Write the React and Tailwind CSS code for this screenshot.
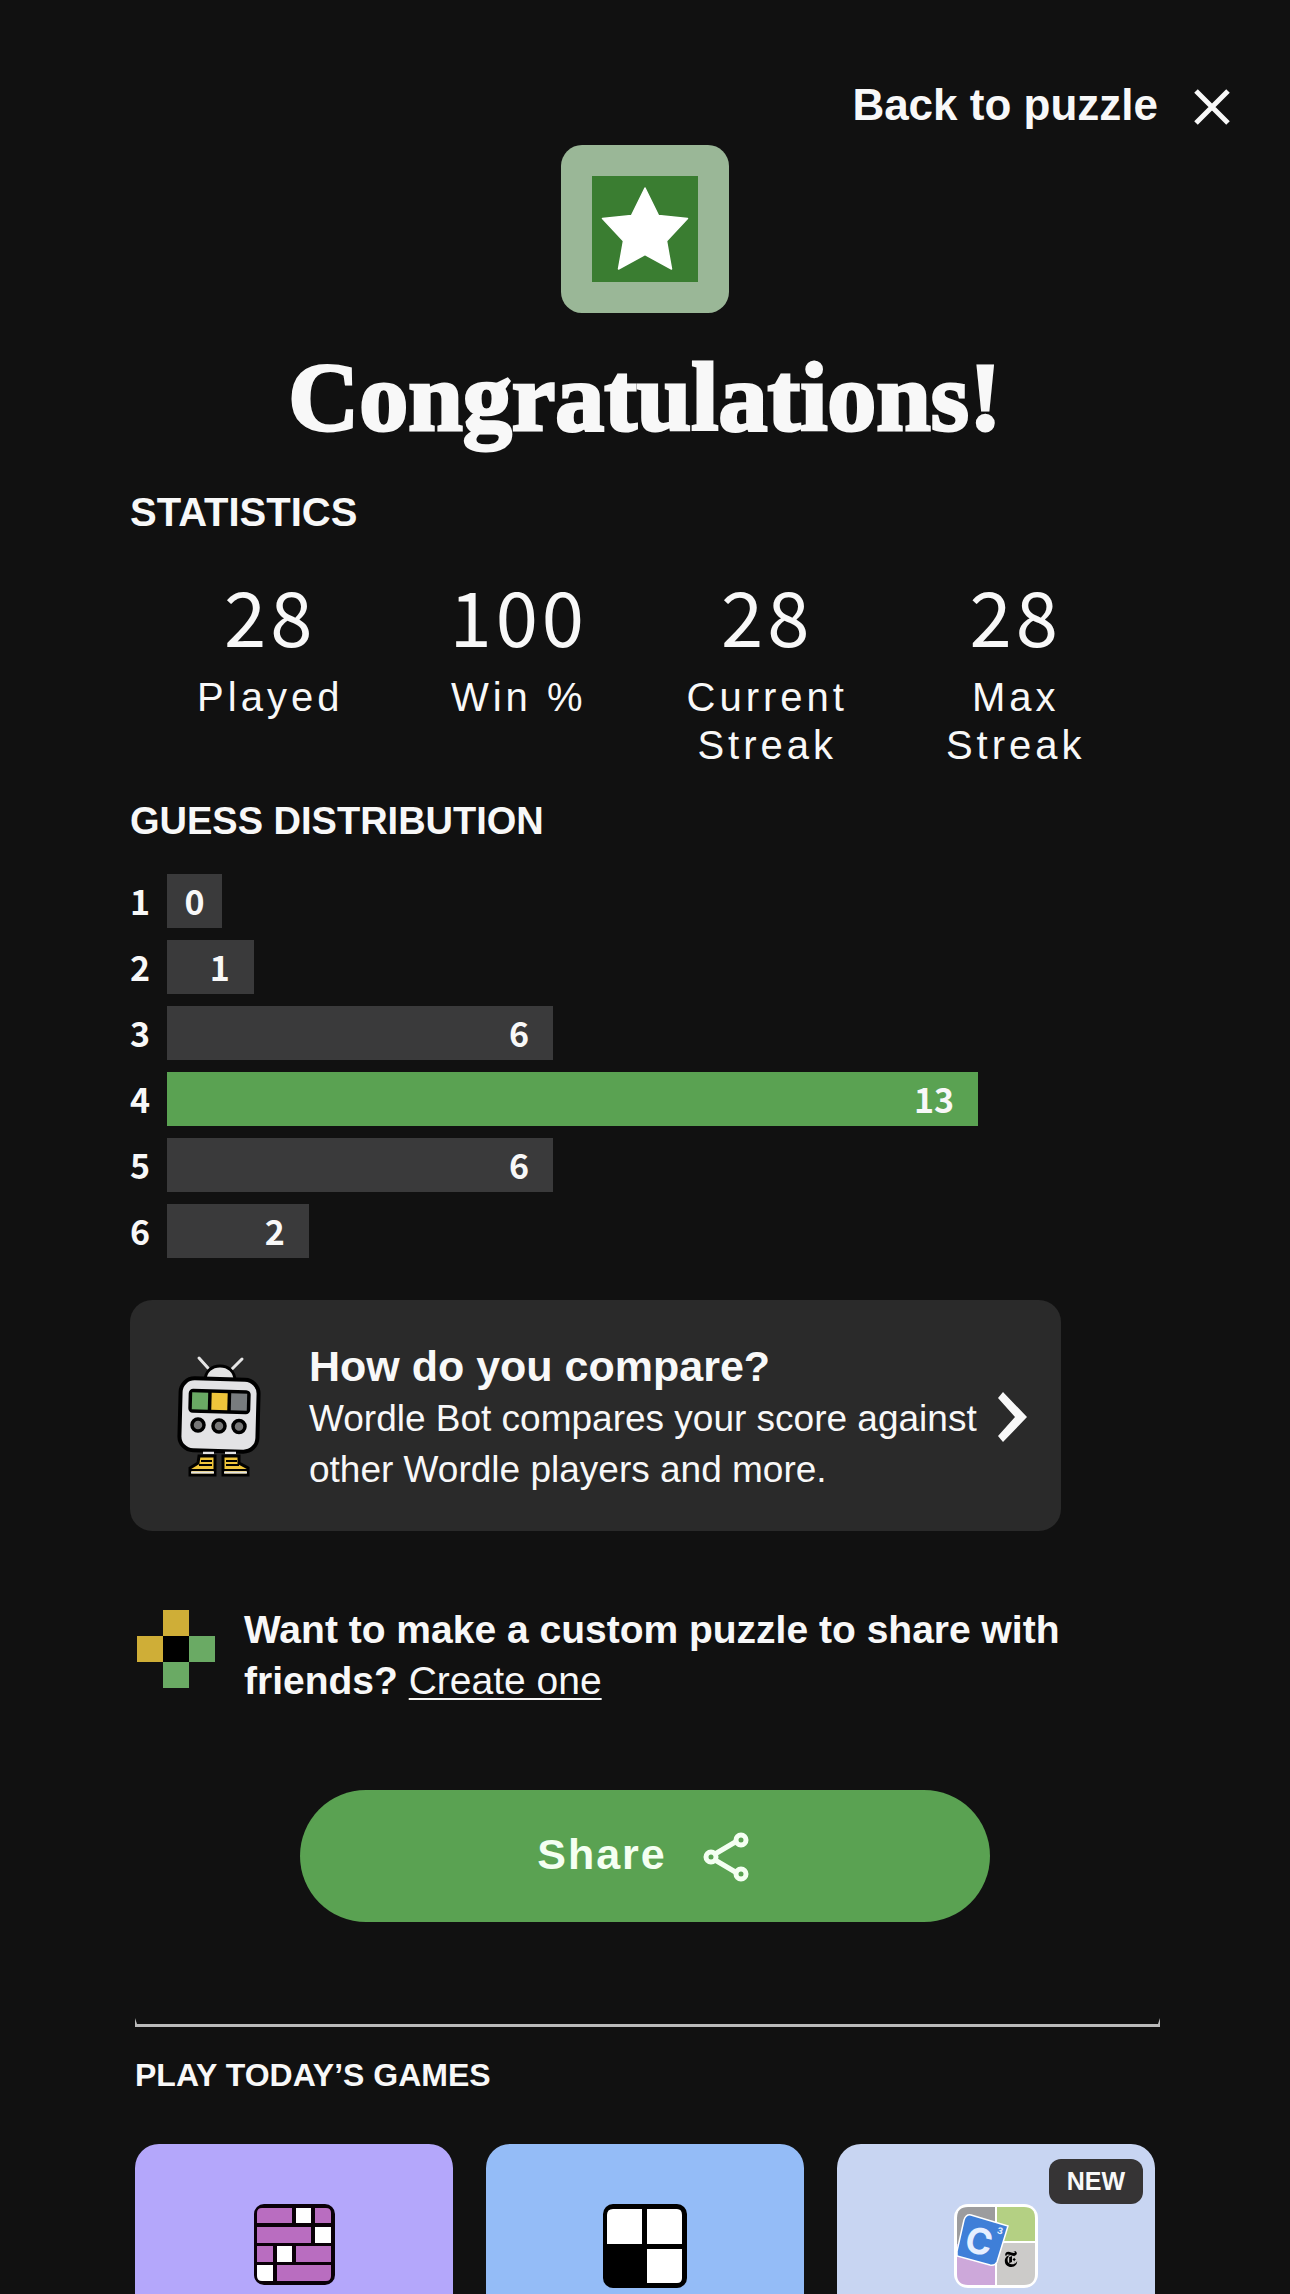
import React from "react";
import { SiNewyorktimes } from "react-icons/si";

const stats = [
  { value: "28", label: "Played" },
  { value: "100", label: "Win %" },
  { value: "28", label: "Current Streak" },
  { value: "28", label: "Max Streak" },
];

const guesses = [
  { guess: 1, count: 0, width: 6.8 },
  { guess: 2, count: 1, width: 10.7 },
  { guess: 3, count: 6, width: 47.6 },
  { guess: 4, count: 13, width: 100, current: true },
  { guess: 5, count: 6, width: 47.6 },
  { guess: 6, count: 2, width: 17.5 },
];

function CloseIcon() {
  return (
    <svg width="36" height="40" viewBox="0 0 36 40" fill="none" stroke="#f8f8f8" strokeWidth="5" aria-hidden="true">
      <path d="M2 6 34 38M34 6 2 38" />
    </svg>
  );
}

function StarTile() {
  return (
    <svg width="168" height="168" viewBox="0 0 168 168" aria-hidden="true">
      <rect width="168" height="168" rx="21" fill="#9ab797" />
      <rect x="31" y="31" width="106" height="106" fill="#3a7d31" />
      <path
        d="M84 43 97.500 70.500 126.500 73.500 105.500 96 110.500 124 84 109.500 57.500 124 62.500 96 41.500 73.500 70.500 70.500Z"
        fill="#fff"
        stroke="#fff"
        strokeWidth="1.500"
        strokeLinejoin="round"
      />
    </svg>
  );
}

function BotIcon() {
  return (
    <svg className="shrink-0" width="84" height="124" viewBox="0 0 84 124" aria-hidden="true">
      <path d="M22 3 31 13M65 4 55 14" stroke="#e6e6e6" strokeWidth="3" strokeLinecap="round" />
      <path d="M28 26C28 16 35 11 43 11S58 16 58 26Z" fill="#e2e2e2" stroke="#000" strokeWidth="3" />
      <rect x="3" y="24" width="78" height="72" rx="14" fill="#e3e3e5" stroke="#000" strokeWidth="4" transform="rotate(1.500 42 60)" />
      <g transform="rotate(1.500 42 46)">
        <rect x="13" y="36" width="59" height="21" rx="3" fill="#000" stroke="#000" strokeWidth="3" />
        <path d="M15 38h16v17H15z" fill="#6aaa64" />
        <path d="M34.500 38h16v17h-16z" fill="#efc53b" />
        <path d="M54 38h16v17H54z" fill="#787c7e" />
      </g>
      <g fill="#777" stroke="#000" strokeWidth="3.500">
        <circle cx="21" cy="70" r="6" />
        <circle cx="42" cy="71" r="6" />
        <circle cx="62" cy="71.500" r="6" />
      </g>
      <path d="M26 98h11M48 98h11" stroke="#000" strokeWidth="6" />
      <path d="M26 98h11M48 98h11" stroke="#e3e3e5" strokeWidth="2.500" />
      <g stroke="#000" strokeWidth="3">
        <path d="M22 101H38V120H13V113L21 108Z" fill="#efc53b" />
        <path d="M46 101H62V108L71 113V120H46Z" fill="#efc53b" />
      </g>
      <path d="M24 106h11M22 110h13M49 106h11M49 110h13" stroke="#000" strokeWidth="2" />
      <path d="M13 115H38M46 115H71" stroke="#000" strokeWidth="2" />
      <path d="M14 117.500H37M47 117.500H70" stroke="#e3e3e5" strokeWidth="2" />
    </svg>
  );
}

function ChevronIcon() {
  return (
    <svg className="shrink-0" width="30" height="50" viewBox="0 0 30 50" aria-hidden="true">
      <path d="M6 0 30 25 6 50 1 44 18 25 1 6Z" fill="#f8f8f8" />
    </svg>
  );
}

function PlusTiles() {
  return (
    <svg className="shrink-0" width="78" height="78" viewBox="0 0 78 78" aria-hidden="true">
      <path d="M26 0h26v26H26zM0 26h26v26H0z" fill="#cfae37" />
      <path d="M26 26h26v26H26z" fill="#000" />
      <path d="M52 26h26v26H52zM26 52h26v26H26z" fill="#6aaa64" />
    </svg>
  );
}

function ShareIcon() {
  return (
    <svg width="46" height="56" viewBox="0 0 46 56" fill="none" stroke="#f4fff2" strokeWidth="5" aria-hidden="true">
      <path d="M12 28 34 15M12 34 34 47" />
      <circle cx="8" cy="31" r="5" />
      <circle cx="38" cy="14" r="5" />
      <circle cx="38" cy="48" r="5" />
    </svg>
  );
}

function MidiIcon() {
  return (
    <svg width="81" height="81" viewBox="0 0 81 81" aria-hidden="true">
      <rect width="81" height="81" rx="10" fill="#0a0008" />
      <g fill="#b96dc0">
        <path d="M8 4H38V19H3V9Q3 4 8 4Z" />
        <path d="M61 4H72Q77 4 77 9V19H61Z" />
        <path d="M3 23H57V39H3zM3 42H19V58H3zM42 42H77V58H42z" />
        <path d="M23 61H77V72Q77 77 72 77H23Z" />
      </g>
      <g fill="#fff">
        <path d="M42 4H57V19H42zM61 23H77V39H61zM23 42H38V58H23z" />
        <path d="M3 61H19V77H8Q3 77 3 72Z" />
      </g>
    </svg>
  );
}

function MiniIcon() {
  return (
    <svg width="84" height="84" viewBox="0 0 84 84" aria-hidden="true">
      <rect width="84" height="84" rx="10" fill="#000" />
      <g fill="#fff">
        <path d="M10 5H39V40H4V11Q4 5 10 5Z" />
        <path d="M44 5H74Q79 5 79 11V40H44Z" />
        <path d="M44 45H79V74Q79 79 74 79H44Z" />
      </g>
    </svg>
  );
}

function CrossplayIcon() {
  return (
    <svg width="84" height="84" viewBox="0 0 84 84" aria-hidden="true">
      <rect width="84" height="84" rx="14" fill="#fff" />
      <path d="M14 3H41V41H3V14Q3 3 14 3Z" fill="#9c9c9e" />
      <path d="M43 3H70Q81 3 81 14V37H43Z" fill="#b4d083" />
      <path d="M3 40H41V81H14Q3 81 3 70Z" fill="#cda8da" />
      <path d="M43 39H81V70Q81 81 70 81H43Z" fill="#cccbc9" />
      <path d="M17 11 54 22 43 58Q41 62 36 61L3 52V47L10 16Q12 10 17 11Z" fill="#3f7fd8" stroke="#fff" strokeWidth="1.500" />
      <text x="25" y="50" fontSize="36" textAnchor="middle" fill="#e6efff" className="font-['Inter'] font-bold" transform="rotate(14 25 37)">
        C
      </text>
      <text x="46" y="30" fontSize="9" textAnchor="middle" fill="#e6efff" className="font-['Inter'] font-bold" transform="rotate(14 46 27)">
        3
      </text>
      <SiNewyorktimes x="49" y="47" width="27" height="27" fill="#000" color="#000" />
    </svg>
  );
}

const games = [
  { name: "Midi Crossword", color: "bg-[#b4a7fb]", Icon: MidiIcon },
  { name: "Mini Crossword", color: "bg-[#94bcf7]", Icon: MiniIcon },
  { name: "Crossplay", color: "bg-[#c8d5f2]", Icon: CrossplayIcon, isNew: true },
];

export default function App() {
  return (
    <main className="flex min-h-screen flex-col bg-[#111111] font-['Liberation_Sans',Arial,sans-serif] text-[#f8f8f8]">
      <header className="flex justify-end pt-[81px] pr-[60px]">
        <button type="button" className="flex items-center gap-9 text-[44px] leading-[48px] font-bold">
          Back to puzzle
          <CloseIcon />
        </button>
      </header>

      <div className="mt-4 flex flex-col items-center gap-9">
        <StarTile />
        <h1 className="font-['Liberation_Serif',serif] text-[98px] leading-[96px] font-bold [-webkit-text-stroke:3px_#f8f8f8]">
          Congratulations!
        </h1>
      </div>

      <div className="flex flex-1 flex-col px-[130px]">
        <section>
          <h2 className="mt-[43px] text-[40px] leading-[48px] font-bold">STATISTICS</h2>
          <ul className="mt-[38px] mr-5 ml-4 grid grid-cols-4 tracking-[4px]">
            {stats.map((s) => (
              <li key={s.label} className="flex flex-col items-center gap-[19px] px-8 text-center">
                <span className="font-['Noto_Sans_CJK_JP',sans-serif] text-[76px] leading-[80px]">{s.value}</span>
                <span className="text-[40px] leading-[48px]">{s.label}</span>
              </li>
            ))}
          </ul>
        </section>

        <section>
          <h2 className="mt-7 text-[38px] leading-[48px] font-bold">GUESS DISTRIBUTION</h2>
          <ol className="mt-[29px] flex max-w-[848px] flex-col gap-3 font-['Noto_Sans_CJK_JP',sans-serif] text-[34px] leading-[54px] font-bold">
            {guesses.map((g) => (
              <li key={g.guess} className="flex">
                <span className="w-[37px]">{g.guess}</span>
                <div className="flex-1">
                  <div
                    className={
                      g.current
                        ? "bg-[#5aa252] pr-6 text-right"
                        : g.count === 0
                          ? "bg-[#3a3a3b] text-center"
                          : "bg-[#3a3a3b] pr-6 text-right"
                    }
                    style={{ width: `${g.width}%` }}
                  >
                    {g.count}
                  </div>
                </div>
              </li>
            ))}
          </ol>
        </section>

        <a
          href="#bot"
          className="mt-[42px] mr-[99px] flex items-center rounded-[22px] bg-[#2a2a2a] pt-[39px] pr-[34px] pb-9 pl-[47px]"
        >
          <BotIcon />
          <div className="ml-12 flex-1">
            <h3 className="text-[43px] leading-[54px] font-bold">How do you compare?</h3>
            <p className="text-[37px] leading-[51px]">Wordle Bot compares your score against other Wordle players and more.</p>
          </div>
          <ChevronIcon />
        </a>

        <div className="mt-[73px] flex gap-[29px] pl-[7px]">
          <div className="pt-1.5">
            <PlusTiles />
          </div>
          <p className="text-[39px] leading-[51px] font-bold">
            Want to make a custom puzzle to share with friends?{" "}
            <a href="#create" className="font-normal underline decoration-2 underline-offset-4">
              Create one
            </a>
          </p>
        </div>

        <button
          type="button"
          className="mt-[84px] flex h-[132px] w-[67%] items-center justify-center gap-9 self-center rounded-full bg-[#5aa252] pr-1 pb-1 text-[43px] leading-[48px] font-bold tracking-[2px] text-[#f4fff2]"
        >
          Share
          <ShareIcon />
        </button>

        <section className="flex flex-1 flex-col pl-[5px]">
          <hr className="mt-24 h-[9px] border-x-2 border-t-[6px] border-b-[3px] border-x-[#bbbbbb] border-t-transparent border-b-[#bbbbbb]" />
          <h2 className="mt-7 text-[32px] leading-10 font-bold">PLAY TODAY’S GAMES</h2>
          <div className="mt-[49px] mr-[5px] grid flex-1 grid-cols-3 gap-[33px]">
            {games.map(({ name, color, Icon, isNew }) => (
              <a
                key={name}
                href="#games"
                aria-label={name}
                className={`relative flex justify-center rounded-t-3xl pt-[60px] ${color}`}
              >
                <Icon />
                {isNew && (
                  <span className="absolute top-[15px] right-3 rounded-xl bg-[#363435] px-[18px] py-2 text-[25px] leading-[29px] font-bold">
                    NEW
                  </span>
                )}
              </a>
            ))}
          </div>
        </section>
      </div>
    </main>
  );
}
